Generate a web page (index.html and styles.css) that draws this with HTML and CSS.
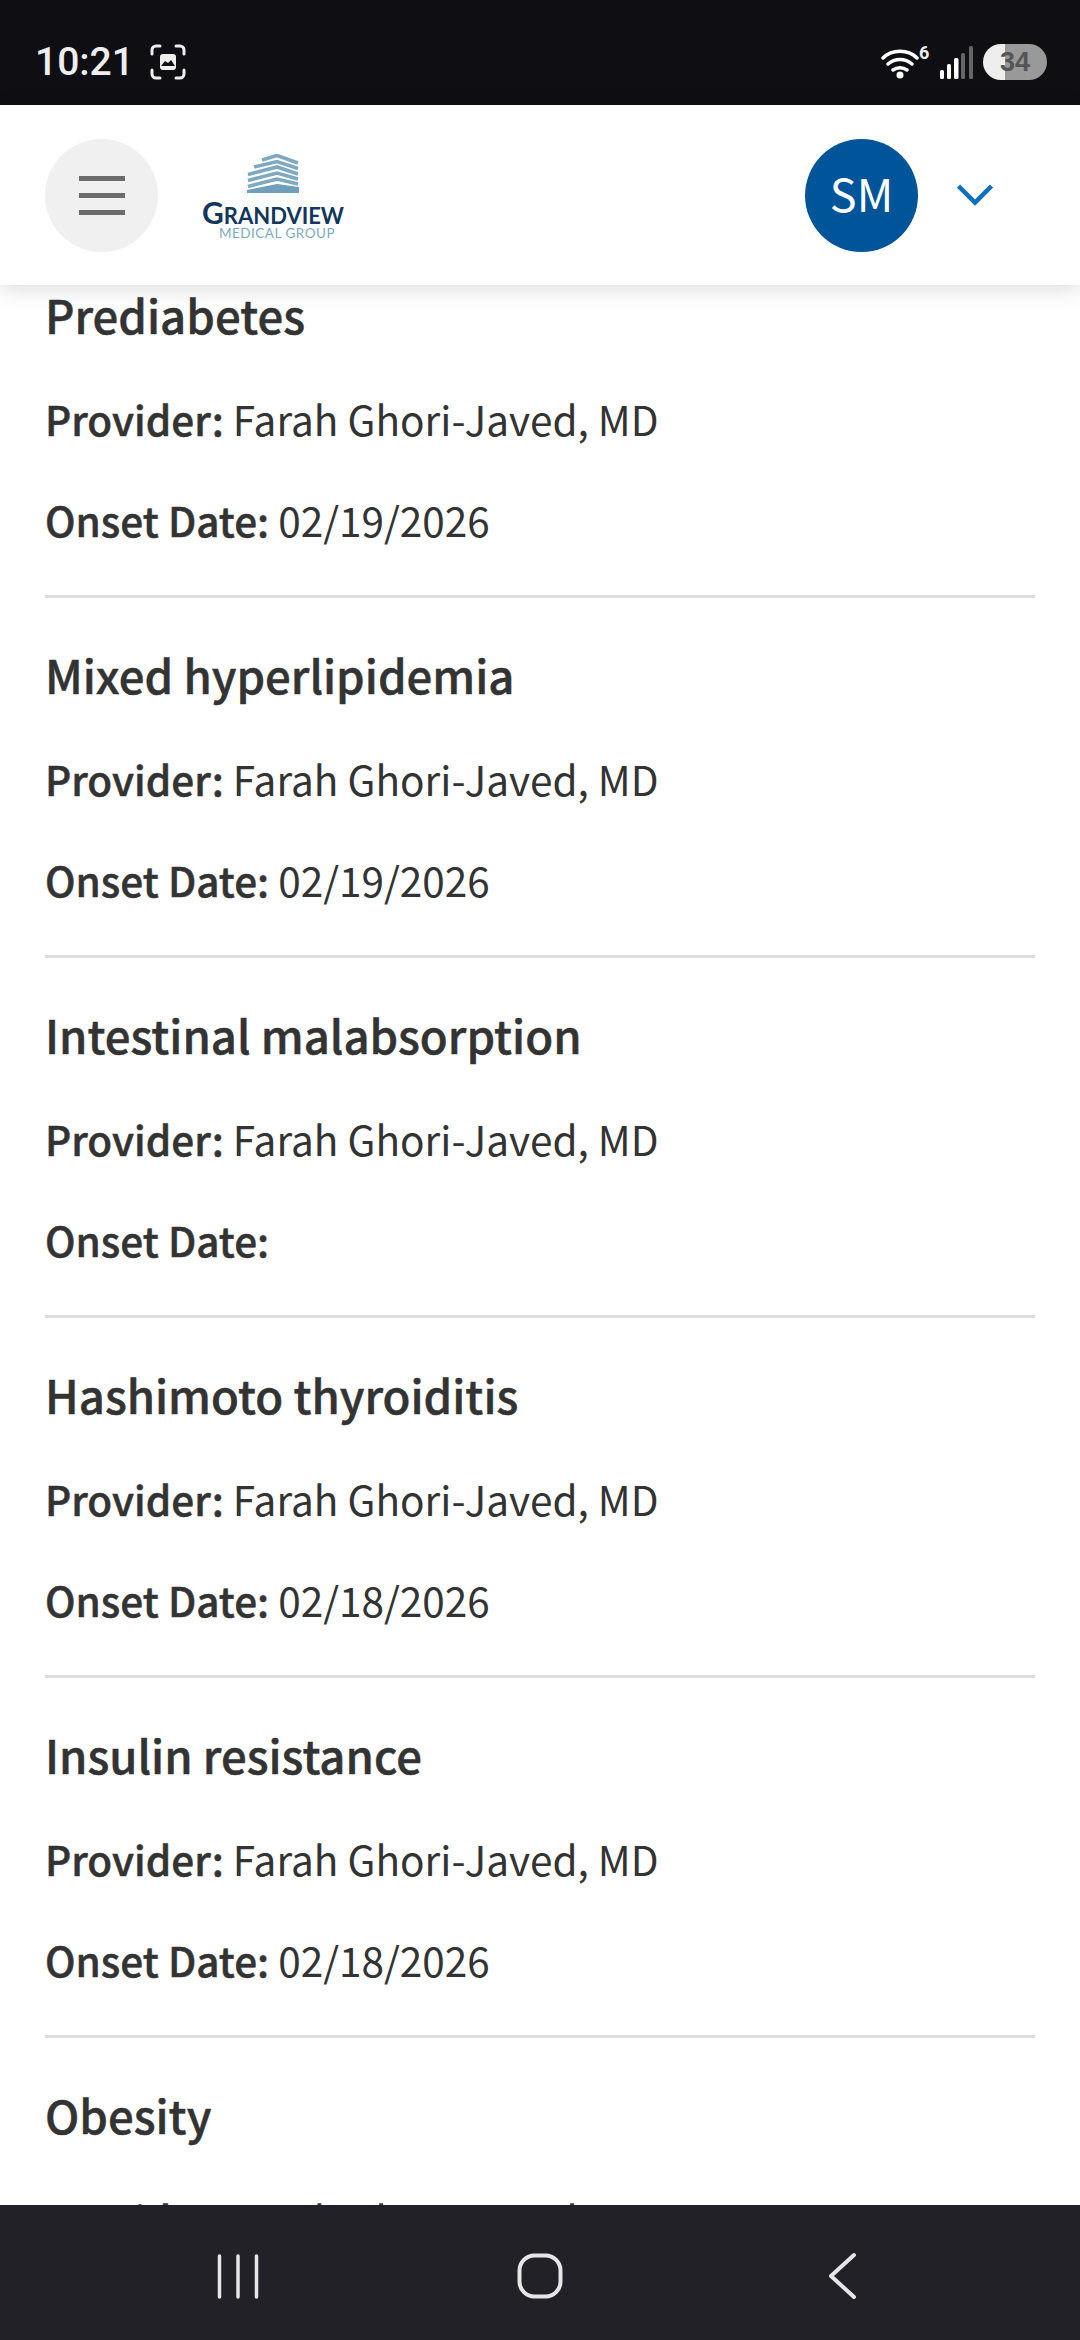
FILE: index.html
```html
<!DOCTYPE html>
<html lang="en">

<head>
    <meta charset="UTF-8">
    <meta name="viewport" content="width=device-width, initial-scale=1.0">
    <title>Health Conditions</title>
    <link rel="stylesheet" href="styles.css">
</head>

<body>
    <div class="status-bar">
        <div class="status-left">
            <span class="clock">10:21</span>
            <svg class="capture-icon" width="36" height="36" viewBox="0 0 36 36" fill="none">
                <path d="M2 10V6a4 4 0 0 1 4-4h4M26 2h4a4 4 0 0 1 4 4v4M34 26v4a4 4 0 0 1-4 4h-4M10 34H6a4 4 0 0 1-4-4v-4" stroke="#eeeeee" stroke-width="3" stroke-linecap="round" />
                <rect x="10" y="10" width="16" height="16" rx="3" fill="#eeeeee" />
                <path d="M11 22l4-5 3 2 3-3 4 6z" fill="#0e0e13" />
            </svg>
        </div>
        <div class="status-right">
            <svg class="wifi-icon" width="50" height="40" viewBox="0 -2 50 40" fill="none">
                <path d="M2 14C11 5 27 5 36 14M7 20c7-6 17-6 24 0M12 26c4-3 10-3 14 0" stroke="#ffffff" stroke-width="3.500" stroke-linecap="round" />
                <circle cx="19" cy="31" r="3.500" fill="#ffffff" />
                <text x="38" y="15" class="wifi-six">6</text>
            </svg>
            <svg class="signal-icon" width="34" height="34" viewBox="0 0 34 34">
                <rect x="1" y="25" width="4" height="9" rx="1.500" fill="#ffffff" />
                <rect x="8" y="19" width="4" height="15" rx="1.500" fill="#ffffff" />
                <rect x="15" y="13" width="4.500" height="21" rx="1.500" fill="#ffffff" />
                <rect x="22" y="8" width="4" height="26" rx="1.500" fill="#666666" />
                <rect x="30" y="1" width="4" height="33" rx="1.500" fill="#666666" />
            </svg>
            <div class="battery">34</div>
        </div>
    </div>

    <header class="app-header">
        <button class="menu-btn">
            <span></span>
            <span></span>
            <span></span>
        </button>
        <div class="logo">
            <svg width="52" height="40" viewBox="0 0 52 40" fill="none">
                <g stroke="#7fa9c0" stroke-width="3.600">
                    <path d="M15 6L30 1.500L51 9" />
                    <path d="M7 13L30 7.500L51 14.500" />
                    <path d="M1 20.500L30 13L51 20" />
                    <path d="M1 26.500L30 19L51 25" />
                    <path d="M1 32.500L30 25L51 30" />
                </g>
                <path d="M0 39V36L30 30L52 33V39z" fill="#6f9fb9" />
            </svg>
            <div class="logo-name"><span class="logo-cap">G</span>RANDVIEW</div>
            <div class="logo-sub">MEDICAL GROUP</div>
        </div>
        <div class="avatar">SM</div>
        <svg class="chevron" width="36" height="22" viewBox="0 0 36 22" fill="none">
            <path d="M1.500 2L18 18.500L34.500 2" stroke="#0f6fbe" stroke-width="4.500" />
        </svg>
    </header>

    <main class="conditions">
        <div class="condition-list">
            <section class="condition">
                <h3>Prediabetes</h3>
                <p><b>Provider:</b> Farah Ghori-Javed, MD</p>
                <p><b>Onset Date:</b> 02/19/2026</p>
            </section>
            <section class="condition">
                <h3>Mixed hyperlipidemia</h3>
                <p><b>Provider:</b> Farah Ghori-Javed, MD</p>
                <p><b>Onset Date:</b> 02/19/2026</p>
            </section>
            <section class="condition">
                <h3>Intestinal malabsorption</h3>
                <p><b>Provider:</b> Farah Ghori-Javed, MD</p>
                <p><b>Onset Date:</b></p>
            </section>
            <section class="condition">
                <h3>Hashimoto thyroiditis</h3>
                <p><b>Provider:</b> Farah Ghori-Javed, MD</p>
                <p><b>Onset Date:</b> 02/18/2026</p>
            </section>
            <section class="condition">
                <h3>Insulin resistance</h3>
                <p><b>Provider:</b> Farah Ghori-Javed, MD</p>
                <p><b>Onset Date:</b> 02/18/2026</p>
            </section>
            <section class="condition">
                <h3>Obesity</h3>
                <p><b>Provider:</b> Farah Ghori-Javed, MD</p>
                <p><b>Onset Date:</b> 02/18/2026</p>
            </section>
        </div>
    </main>

    <nav class="nav-bar">
        <svg width="42" height="46" viewBox="0 0 42 46" fill="none">
            <path d="M2.500 3V44M21 3V44M39.500 3V44" stroke="#e6e6e6" stroke-width="3.500" stroke-linecap="round" />
        </svg>
        <svg width="46" height="46" viewBox="0 0 46 46" fill="none">
            <rect x="2.500" y="2.500" width="41" height="41" rx="15" stroke="#e6e6e6" stroke-width="4" />
        </svg>
        <svg width="30" height="48" viewBox="0 0 30 48" fill="none">
            <path d="M27 3L4 24L27 45" stroke="#e6e6e6" stroke-width="4" stroke-linecap="round" stroke-linejoin="round" />
        </svg>
    </nav>
</body>

</html>
```

FILE: styles.css
```css
* {
    box-sizing: border-box;
}

body {
    margin: 0;
    height: 2340px;
    display: flex;
    flex-direction: column;
    overflow: hidden;
    background-color: #ffffff;
    color: #333333;
    font-family: "Noto Sans CJK SC", "Noto Sans", sans-serif;
}

/* status bar */
.status-bar {
    flex: 0 0 105px;
    display: flex;
    justify-content: space-between;
    align-items: center;
    padding: 18px 33px 0 35px;
    background-color: #0e0e13;
}

.status-left,
.status-right {
    display: flex;
    align-items: center;
}

.clock {
    font-family: Roboto, sans-serif;
    font-size: 39px;
    font-weight: 500;
    line-height: 46px;
    color: #eeeeee;
}

.capture-icon {
    margin-left: 16px;
}

.wifi-six {
    font-family: Roboto, sans-serif;
    font-size: 18px;
    font-weight: 700;
    fill: #eeeeee;
}

.signal-icon {
    margin-left: 8px;
}

.battery {
    width: 64px;
    height: 36px;
    margin-left: 10px;
    border-radius: 18px;
    background: linear-gradient(to right, #eeeeee 22px, #999999 22px);
    color: #555555;
    font-family: "Liberation Sans", sans-serif;
    font-size: 27px;
    font-weight: 700;
    line-height: 36px;
    text-align: center;
}

/* app header */
.app-header {
    flex: 0 0 180px;
    display: flex;
    align-items: center;
    padding: 0 87px 0 45px;
    background-color: #ffffff;
    box-shadow: 0 4px 22px rgba(0, 0, 0, 0.14);
}

.menu-btn {
    width: 113px;
    height: 113px;
    display: flex;
    flex-direction: column;
    align-items: center;
    justify-content: center;
    gap: 12px;
    padding: 0;
    border: none;
    border-radius: 50%;
    background-color: #f0f0f0;
}

.menu-btn span {
    width: 46px;
    height: 5px;
    background-color: #6b6b6b;
}

.logo {
    display: flex;
    flex-direction: column;
    align-items: center;
    margin: 4px 0 0 43px;
    width: 144px;
    font-family: Lato, sans-serif;
}

.logo-name {
    margin-top: 7px;
    font-size: 22px;
    font-weight: 700;
    line-height: 22px;
    color: #12375a;
    white-space: nowrap;
}

.logo-cap {
    font-size: 30px;
}

.logo-sub {
    margin-left: 8px;
    font-size: 13.500px;
    line-height: 13px;
    letter-spacing: 0.5px;
    color: #7fa9c0;
    white-space: nowrap;
}

.avatar {
    width: 113px;
    height: 113px;
    margin-left: auto;
    border-radius: 50%;
    background-color: #00549a;
    color: #ffffff;
    font-size: 45px;
    line-height: 107px;
    text-align: center;
}

.chevron {
    margin-left: 39px;
}

/* condition list */
.conditions {
    flex: 1;
    min-height: 0;
    overflow: hidden;
    padding: 0 45px;
}

/* list is scrolled a little under the header */
.condition-list {
    margin-top: -47px;
}

.condition {
    height: 360px;
    padding-top: 48px;
    border-bottom: 3px solid #dddddd;
}

.condition h3 {
    margin: 0 0 47px;
    font-size: 45.500px;
    font-weight: 500;
    line-height: 56px;
    -webkit-text-stroke: 0.5px #333333;
}

.condition p {
    margin: 0 0 41px;
    font-size: 40.500px;
    line-height: 60px;
}

.condition b {
    font-weight: 500;
    -webkit-text-stroke: 0.5px #333333;
}

/* android nav */
.nav-bar {
    flex: 0 0 135px;
    display: grid;
    grid-template-columns: 476px 128px 476px;
    align-items: center;
    justify-items: center;
    padding-top: 6px;
    background-color: #222127;
}
```
